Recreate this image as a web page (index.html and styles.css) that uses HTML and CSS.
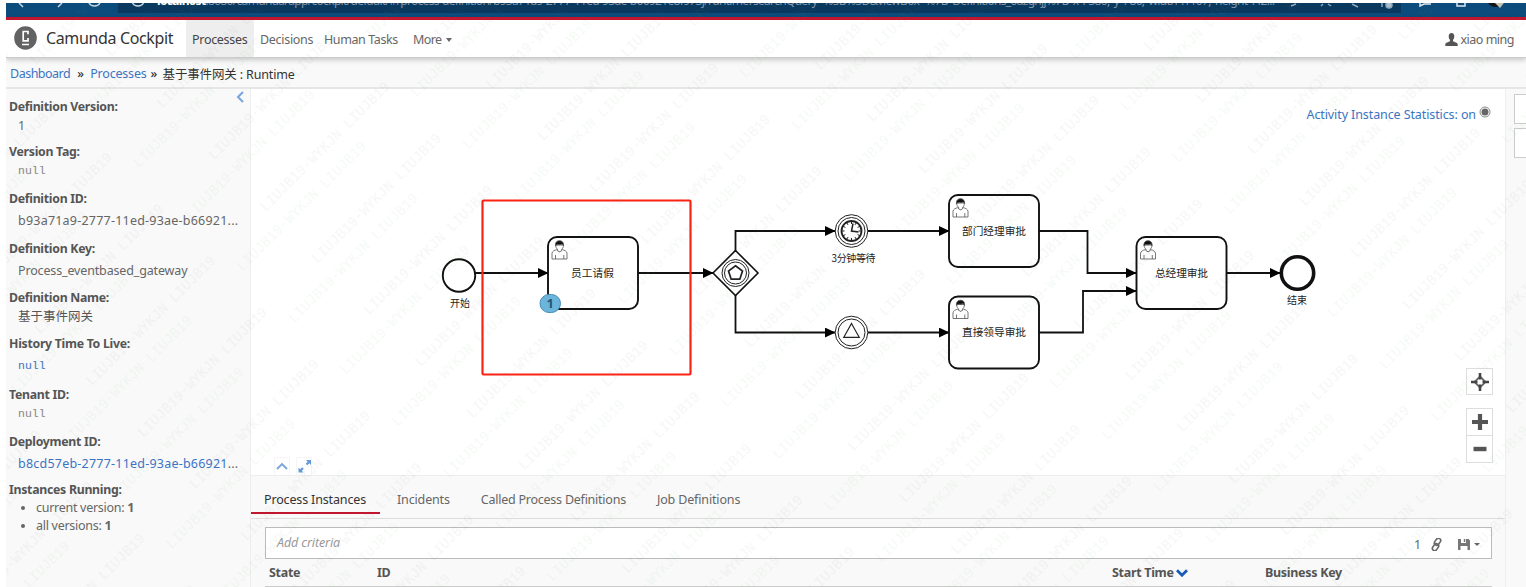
FILE: index.html
```html
<!DOCTYPE html>
<html lang="en">
<head>
<meta charset="utf-8">
<title>Camunda Cockpit</title>
<link rel="stylesheet" href="styles.css">
</head>
<body>
<div class="window">
  <div class="browser">
    <div class="nav-icons">
      <svg width="100" height="14" viewBox="0 0 100 14" fill="none" stroke="#c9d6e2" stroke-width="1.5"><path d="M17 4L13 0M52 4l4-4"/><path d="M83 0a6 5 0 0 0 11 0"/></svg>
    </div>
    <div class="url">
      <svg class="info" width="14" height="10" viewBox="0 0 14 10" fill="none" stroke="#c9d6e2" stroke-width="1.4"><path d="M1.500 0a6 5 0 0 0 11 0"/></svg>
      <span class="address"><b>localhost</b>:8080/camunda/app/cockpit/default/#/process-definition/b93a71a9-2777-11ed-93ae-b66921e8f973j/runtime?searchQuery=%5B%5D&amp;viewBox=%7B"Definitions_0azgnjj%7B"x":-380,"y":-86,"width":1107,"height":42...</span>
      <svg class="tools" width="120" height="10" viewBox="0 0 120 10" fill="none" stroke="#8ea8bd" stroke-width="1.5"><path d="M3 3l5-2M33 3l2-2M40 1l3 2M64 1l6 3"/><circle cx="101" cy="2" r="3" fill="#a9bdcb"/><path d="M94 0v4"/></svg>
    </div>
    <svg class="browser-end" width="125" height="14" viewBox="0 0 125 14"><path d="M19 0v3l4-2h7M56 0v3h8V0" fill="none" stroke="#dde7ef" stroke-width="1.500"/><path d="M87 0a9 7.500 0 0 0 16 0z" fill="#10151a"/><path d="M94 0h9l-4 5z" fill="#c5c6b4"/></svg>
  </div>
  <header class="header">
    <svg class="logo" width="23" height="24" viewBox="0 0 23 24"><ellipse cx="11.500" cy="12" rx="11.300" ry="11.800" fill="#626262"/><path d="M14 8.300V5.500H9.200v9.300H14v-2.800M8 18.500h7" fill="none" stroke="#fff" stroke-width="1.700"/></svg>
    <span class="brand">Camunda Cockpit</span>
    <nav class="menu">
      <a class="active"><span>Processes</span></a><a class="dec"><span>Decisions</span></a><a class="tasks"><span>Human Tasks</span></a><a class="more"><span>More</span><i class="caret"></i></a>
    </nav>
    <div class="user"><svg width="13" height="13" viewBox="0 0 13 13"><path d="M6.500 0C4.600 0 3.700 1.300 3.700 3.200c0 1.700.6 2.800 1.300 3.500v1.600C3.500 9.200.3 9.600.3 11.500V13h12.400v-1.500c0-1.900-3.200-2.300-4.700-3.200V6.700c.7-.7 1.300-1.800 1.300-3.500C9.300 1.300 8.400 0 6.500 0z" fill="#555"/></svg><span>xiao ming</span></div>
  </header>
  <div class="crumbs"><a>Dashboard</a><b>»</b><a class="c2">Processes</a><b class="sep2">»</b><span class="here">基于事件网关 : Runtime</span></div>
  <main class="main">
    <aside class="side">
      <svg class="collapse" width="10" height="14" viewBox="0 0 10 14" fill="none" stroke="#78a5e0" stroke-width="2"><path d="M8 2L3 7l5 5"/></svg>
      <section class="g8"><h4>Definition Version:</h4><p>1</p></section>
      <section class="g10"><h4>Version Tag:</h4><p class="mono">null</p></section>
      <section class="loose g10"><h4>Definition ID:</h4><p class="id">b93a71a9-2777-11ed-93ae-b66921...</p></section>
      <section class="loose g9"><h4>Definition Key:</h4><p>Process_eventbased_gateway</p></section>
      <section class="g9"><h4>Definition Name:</h4><p class="cjk">基于事件网关</p></section>
      <section class="loose g11"><h4>History Time To Live:</h4><p class="mono link">null</p></section>
      <section class="g10"><h4>Tenant ID:</h4><p class="mono">null</p></section>
      <section class="loose g8"><h4>Deployment ID:</h4><p class="id"><span class="link">b8cd57eb-2777-11ed-93ae-b66921</span>...</p></section>
      <section><h4>Instances Running:</h4><ul><li>current version: <b>1</b></li><li>all versions: <b>1</b></li></ul></section>
    </aside>
    <div class="content">
      <div class="diagram">
        <svg class="canvas" width="1254" height="387" viewBox="251 89 1254 387">
          <defs>
            <marker id="arrow" markerUnits="userSpaceOnUse" markerWidth="11" markerHeight="11" refX="10" refY="5" orient="auto"><path d="M0 .1L10.500 5 0 9.900z"/></marker>
            <g id="person" fill="#fff" stroke="#555" stroke-width=".8"><path d="M.5 18.500v-5.800c.4-2 2.200-2.900 4.900-3.600l2.600 2 2.700-2c2.700.7 4.400 1.600 4.800 3.600v5.800z"/><path d="M4 18.500v-4M12.300 18.500v-4" fill="none"/><path d="M4.200 4.500c0 2.400 1 3.800 1.900 4.300v1.500l2 1 2-1V8.800c1-.5 1.800-2 1.800-4.300z"/><path d="M3.900 5.400C3.500 1.800 5.500.2 8 .2s4.500 1.600 4.100 5.200c-.7-1.300-1.500-2-2.500-1.500-1.800.7-4-.6-5.700 1.500z" fill="#111"/></g>
          </defs>
          <g fill="none" stroke="#111" stroke-width="1.800" marker-end="url(#arrow)">
            <path d="M475 273H548"/><path d="M638 273H713"/><path d="M735.500 251V231H835"/><path d="M735.500 295v37.500H835"/><path d="M868 231h81"/><path d="M868 332.500h81"/><path d="M1039 231h48.500v42H1136"/><path d="M1039 332.500h44V291h53"/><path d="M1226 273h54"/>
          </g>
          <g fill="#fff" stroke="#111" stroke-width="1.900">
            <circle cx="459" cy="275.500" r="16.200"/>
            <rect x="548" y="237" width="90" height="72" rx="9"/>
            <rect x="949" y="195" width="90" height="72" rx="9"/>
            <rect x="949" y="296.500" width="90" height="72" rx="9"/>
            <rect x="1136.500" y="237" width="90" height="72" rx="9"/>
            <path d="M735.500 250.500L758 273l-22.500 22.500L713 273z" stroke-width="1.600"/>
            <circle cx="1297.500" cy="273" r="16.200" stroke-width="3.600"/>
          </g>
          <g fill="#fff" stroke="#222" stroke-width="1">
            <circle cx="735.500" cy="273" r="13.500"/><circle cx="735.500" cy="273" r="11"/>
            <circle cx="851.500" cy="231" r="16.300"/><circle cx="851.500" cy="231" r="13.500"/>
            <circle cx="851.500" cy="332.500" r="16.300"/><circle cx="851.500" cy="332.500" r="13.500"/>
            <path d="M735.500 265.800l7 5.200-2.700 8.200h-8.600l-2.700-8.200z" stroke-width="1.700"/>
            <path d="M851.500 323.500l7.700 13.800h-15.400z" stroke-width="1.200"/>
            <circle cx="851.500" cy="231" r="10" stroke-width="1.800"/>
            <path d="M851.500 221v3M851.500 238v3M841.500 231h3M858.500 231h3M846.500 222.300l1.500 2.600M855 237.100l1.500 2.600M842.800 226l2.600 1.500M857.600 234.500l2.600 1.500M856.500 222.300l-1.500 2.600M848 237.100l-1.500 2.600M860.200 226l-2.600 1.500M845.400 234.500l-2.600 1.500" stroke-width="1"/>
            <path d="M853 223.500L851.500 231l7 1" fill="none" stroke-width="1.500"/>
          </g>
          <use href="#person" x="551.500" y="240.500"/><use href="#person" x="952.500" y="198.500"/><use href="#person" x="952.500" y="300"/><use href="#person" x="1140" y="240.500"/>
          <g class="task-label"><text x="592.500" y="276.500" textLength="43">员工请假</text><text x="994" y="234.500" textLength="64">部门经理审批</text><text x="994" y="336" textLength="64">直接领导审批</text><text x="1181.500" y="276.500" textLength="53">总经理审批</text></g>
          <g class="event-label"><text x="460" y="306.500">开始</text><text x="853.500" y="262" textLength="44">3分钟等待</text><text x="1297" y="304">结束</text></g>
          <rect x="540" y="294.500" width="20.500" height="18" rx="9" fill="#6bb5dc" stroke="#458eb5"/>
          <text class="token" x="550.200" y="308">1</text>
          <rect x="482.500" y="200.500" width="208" height="174" rx="1" fill="none" stroke="#fa2314" stroke-width="2.200"/>
        </svg>
        <div class="stats"><span>Activity Instance Statistics: on</span><svg width="12" height="12" viewBox="0 0 12 12"><circle cx="6" cy="6" r="5" fill="#fff" stroke="#888"/><circle cx="6" cy="6" r="3.500" fill="#666"/></svg></div>
        <div class="zoom">
          <button><svg width="20" height="20" viewBox="0 0 20 20"><path d="M10 4.500l5.500 5.500-5.500 5.500L4.500 10z" fill="none" stroke="#666" stroke-width="1.800"/><path d="M10 1v6.500M10 12.500V19M1 10h6.500M12.500 10H19" stroke="#444" stroke-width="2.600"/></svg></button>
          <button class="plus"><svg width="16" height="16" viewBox="0 0 16 16"><path d="M8 0v16M0 8h16" stroke="#555" stroke-width="4.200"/></svg></button>
          <button class="minus"><svg width="16" height="16" viewBox="0 0 16 16"><path d="M1.500 8h13" stroke="#555" stroke-width="4.400"/></svg></button>
        </div>
        <svg class="pane-tools" width="38" height="18" viewBox="0 0 38 18"><path d="M.5 18V.5h15V18M22.500 18V.5h15V18" fill="none" stroke="#f5f5f5"/><path d="M3 12l5-5 5 5" fill="none" stroke="#7da5dc" stroke-width="1.900"/><path d="M37 3v5l-1.700-1.700-2 2-1.600-1.600 2-2L32 3zM24.500 15.500v-5l1.700 1.700 2-2 1.600 1.600-2 2 1.700 1.700z" fill="#6499da"/></svg>
      </div>
      <nav class="tabs"><a class="on"><span>Process Instances</span></a><a><span>Incidents</span></a><a class="called"><span>Called Process Definitions</span></a><a><span>Job Definitions</span></a></nav>
      <div class="results">
        <div class="search"><em>Add criteria</em><span class="count">1</span>
          <svg width="13" height="13" viewBox="0 0 13 13" fill="none" stroke="#666" stroke-width="1.600"><rect x="5.200" y="0" width="4.600" height="7.500" rx="2.300" transform="rotate(35 7.500 3.800)"/><rect x="3.200" y="5.400" width="4.600" height="7.500" rx="2.300" transform="rotate(35 5.500 9.200)"/></svg>
          <svg class="disk" width="12" height="11" viewBox="0 0 12 11"><path d="M0 0h3v4h5V0h2.500L12 1.500V11H9.500V7H2.500v4H0zM5.800 0H7.300v3H5.800z" fill="#777"/></svg><i class="caret small"></i>
        </div>
        <div class="thead"><b>State</b><b class="col-id">ID</b><b class="col-start">Start Time</b><svg width="12" height="8" viewBox="0 0 12 8"><path d="M1 1.200l5 5 5-5" fill="none" stroke="#155cb5" stroke-width="2.800"/></svg><b class="col-key">Business Key</b></div>
      </div>
    </div>
    <div class="right"><i></i><i></i></div>
  </main>
  <svg class="watermark" width="1520" height="584">
    <defs><pattern id="wm" width="246.200" height="73.100" patternUnits="userSpaceOnUse" patternTransform="translate(1265.900 518.900) rotate(-45)">
      <text x="0" y="20" fill="#444">LIUJB19-WYKJN LIUJB19</text>
      <g fill="#389038"><text x="-58.700" y="45.700">LIUJB19-WYKJN LIUJB19</text><text x="187.500" y="45.700">LIUJB19-WYKJN LIUJB19</text></g>
    </pattern></defs>
    <rect width="1520" height="584" fill="url(#wm)"/>
  </svg>
</div>
</body>
</html>
```
FILE: styles.css
```css
* { box-sizing: border-box; }
body { margin: 0; background: #fff; font-family: "Noto Sans", "Noto Sans CJK SC", sans-serif; font-size: 12.5px; letter-spacing: -.15px; color: #666; overflow: hidden; }
.window { position: relative; width: 1520px; height: 584px; margin: 3px 0 0 6px; display: flex; flex-direction: column; overflow: hidden; }
.browser { display: flex; flex: none; height: 14px; background: #0c4c7d; overflow: hidden; }
.nav-icons { width: 112px; flex: none; }
.url { display: flex; align-items: flex-start; width: 1283px; height: 10px; padding-left: 13px; background: #0a395f; overflow: hidden; }
.address { width: 1131px; flex: none; margin: -10px 0 0 12px; line-height: 16px; font-size: 12px; letter-spacing: -.68px; color: #8095aa; white-space: nowrap; }
.address b { color: #fff; }
.info, .tools { flex: none; }
.browser-end { flex: none; }
.header { position: relative; z-index: 1; display: flex; flex: none; align-items: center; height: 41px; border-top: 3px solid #c2152e; border-bottom: 1px solid #ccc; background: #fff; box-shadow: 0 2px 5px #0003; }
.logo { margin-left: 8px; margin-top: -2px; }
.brand { width: 149px; flex: none; margin-top: -2px; padding-left: 9px; font-size: 16px; letter-spacing: -.36px; color: #333; white-space: nowrap; }
.menu { display: flex; align-self: stretch; }
.menu a { display: flex; align-items: center; padding: 2px 6px 0; white-space: nowrap; letter-spacing: -.3px; }
.menu .active { width: 68px; background: #eee; color: #444; }
.menu .dec { width: 64px; }
.menu .tasks { width: 89px; letter-spacing: -.4px; }
.menu .more { letter-spacing: -.6px; }
.caret { border: 3px solid transparent; border-top: 4px solid #666; border-bottom: 0; margin-left: 5px; }
.user { display: flex; align-items: center; gap: 3px; margin: 2px 12px 0 auto; letter-spacing: -.5px; }
.crumbs { display: flex; align-items: center; flex: none; height: 31px; padding: 2px 0 0 4px; background: #f9f9f9; border-bottom: 2px solid #e6e6e6; color: #333; white-space: nowrap; letter-spacing: -.5px; }
.crumbs a, .link { color: #3c74c4; }
.crumbs b { font-weight: 500; width: 20px; padding-left: 7px; }
.crumbs .c2 { letter-spacing: -.2px; }
.crumbs .sep2 { width: 16px; padding-left: 4px; }
.crumbs .here { letter-spacing: -.15px; }
.main { display: flex; flex: 1; min-height: 0; }
.side { position: relative; width: 245px; flex: none; padding: 9px 0 0 3px; background: #f9f9f9; border-right: 1px solid #eee; }
.collapse { position: absolute; right: 5px; top: 1px; }
.side h4 { margin: 0; font-size: 12.3px; line-height: 18px; color: #555; white-space: nowrap; letter-spacing: -.28px; }
.side p { margin: 1px 0 0 9px; line-height: 18px; white-space: nowrap; }
.side .loose p { margin-top: 4px; }
.side .id { letter-spacing: .22px; }
.side .mono { font-family: "Liberation Mono", monospace; font-size: 11.5px; letter-spacing: 0; color: #888; }
.side .mono.link { color: #3c74c4; }
.side .cjk { letter-spacing: 0; color: #555; }
.g8 { padding-bottom: 8px; } .g9 { padding-bottom: 9px; } .g10 { padding-bottom: 10px; } .g11 { padding-bottom: 11px; }
.side ul { margin: 0; padding-left: 27px; line-height: 18px; letter-spacing: -.28px; }
.content { display: flex; flex-direction: column; width: 1254px; flex: none; }
.diagram { position: relative; height: 387px; flex: none; background: #fff; border-bottom: 1px solid #eee; }
.canvas { display: block; letter-spacing: 0; }
.canvas text { text-anchor: middle; fill: #222; font-family: "Noto Sans CJK SC", sans-serif; }
.task-label { font-size: 10.7px; }
.event-label { font-size: 10px; }
.canvas .token { font: bold 13px "Noto Sans", sans-serif; fill: #28556f; }
.stats { position: absolute; right: 14px; top: 17px; display: flex; gap: 3px; color: #3c74c4; line-height: 18px; letter-spacing: -.1px; }
.zoom { position: absolute; right: 12px; top: 279px; width: 27px; display: flex; flex-direction: column; }
.zoom button { display: flex; align-items: center; justify-content: center; height: 27px; padding: 0; border: 1px solid #ddd; background: #fff; }
.zoom .plus { margin-top: 13px; height: 28px; }
.zoom .minus { border-top: 0; height: 27px; }
.pane-tools { position: absolute; left: 23px; bottom: 0; }
.tabs { display: flex; flex: none; height: 43px; background: #f9f9f9; border-bottom: 1px solid #ddd; white-space: nowrap; }
.tabs a { height: 38px; padding: 15px 14px 0 17px; line-height: 18px; }
.tabs .on { width: 129px; padding-left: 13px; border-bottom: 2px solid #c2152e; color: #333; }
.tabs .called { letter-spacing: -.24px; }
.results { flex: 1; padding: 8px 13px 0 14px; background: #f9f9f9; }
.search { display: flex; align-items: center; height: 32px; border: 1px solid #bbb; background: #fff; padding: 2px 11px 0; }
.search em { color: #999; margin-top: -3px; letter-spacing: -.1px; }
.count { margin-left: auto; margin-right: 9px; }
.disk { margin-left: 15px; }
.small { border-top-width: 3px; margin-left: 4px; }
.thead { display: flex; align-items: center; height: 28px; padding-left: 4px; border-bottom: 1px solid #ccc; color: #555; white-space: nowrap; letter-spacing: -.3px; }
.thead b { width: 108px; }
.thead .col-id { width: 735px; }
.thead .col-start { width: 64px; }
.thead .col-key { margin-left: 77px; }
.right { flex: 1; background: #f9f9f9; border-left: 1px solid #eee; padding: 5px 0 0 8px; overflow: hidden; }
.right i { display: block; width: 30px; height: 30px; border: 1px solid #ccc; background: #fff; margin-bottom: 4px; }
.watermark { position: absolute; left: 0; top: 0; z-index: 3; pointer-events: none; letter-spacing: 0; }
.watermark text { font: 14px "Liberation Mono", monospace; opacity: .055; }
```
